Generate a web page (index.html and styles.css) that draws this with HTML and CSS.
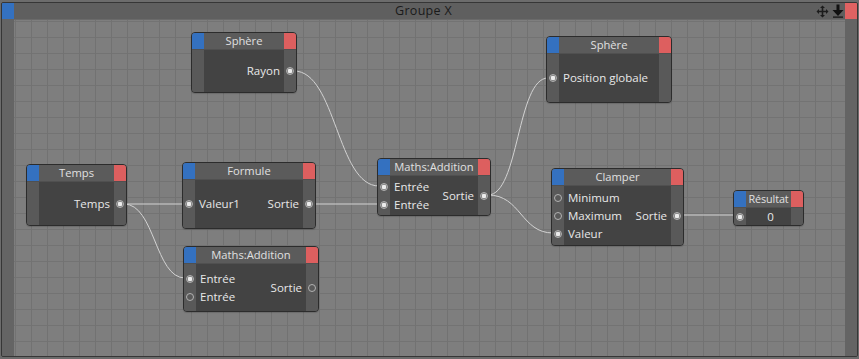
FILE: index.html
```html
<!DOCTYPE html>
<html lang="fr">
<head>
<meta charset="utf-8">
<title>Groupe X</title>
<link rel="stylesheet" href="styles.css">
</head>
<body>
<div class="group">
  <div class="cap cap-blue"></div>
  <div class="group-title">
    <span class="group-name">Groupe X</span>
    <span class="group-tools">
      <svg class="tool" width="13" height="13" viewBox="0 0 13 13" aria-hidden="true">
        <path d="M6.5 0.5 L9 3 H7.3 V5.7 H10 V4 L12.5 6.5 L10 9 V7.3 H7.3 V10 H9 L6.5 12.5 L4 10 H5.7 V7.3 H3 V9 L0.5 6.5 L3 4 V5.7 H5.7 V3 H4 Z" fill="#1c1c1c"/>
      </svg>
      <svg class="tool" width="12" height="14" viewBox="0 0 12 14" aria-hidden="true">
        <path d="M4.5 0.5 H7.5 V6 H11.5 L6 12 L0.5 6 H4.5 Z" fill="#111"/>
        <rect x="1" y="12.5" width="10" height="1.2" fill="#111"/>
      </svg>
    </span>
  </div>
  <div class="cap cap-red"></div>
  <div class="strip"></div>
  <div class="canvas">
    <svg class="wires" width="831" height="336" aria-hidden="true">
      <path d="M280 51 C322 51 323 166 365 166"/>
      <path d="M110 184 H170"/>
      <path d="M110 184 C141 184 141 258 171 258"/>
      <path d="M299 184 H365"/>
      <path d="M474 175 C505 175 503 58 534 58"/>
      <path d="M474 175 C507 175 507 213 539 213"/>
      <path d="M667 195 H721"/>
    </svg>

    <div class="node n-sph1">
      <div class="nt"><span class="nc nc-b"></span><span class="ntx">Sphère</span><span class="nc nc-r"></span></div>
      <div class="nb">
        <div class="ins"></div>
        <div class="outs">
          <div class="row out"><span class="lbl">Rayon</span><span class="pc"><i class="port on"></i></span></div>
        </div>
      </div>
    </div>

    <div class="node n-temps">
      <div class="nt"><span class="nc nc-b"></span><span class="ntx">Temps</span><span class="nc nc-r"></span></div>
      <div class="nb">
        <div class="ins"></div>
        <div class="outs">
          <div class="row out"><span class="lbl">Temps</span><span class="pc"><i class="port on"></i></span></div>
        </div>
      </div>
    </div>

    <div class="node n-form">
      <div class="nt"><span class="nc nc-b"></span><span class="ntx">Formule</span><span class="nc nc-r"></span></div>
      <div class="nb">
        <div class="ins">
          <div class="row"><span class="pc"><i class="port on"></i></span><span class="lbl">Valeur1</span></div>
        </div>
        <div class="outs">
          <div class="row out"><span class="lbl">Sortie</span><span class="pc"><i class="port on"></i></span></div>
        </div>
      </div>
    </div>

    <div class="node n-add1">
      <div class="nt"><span class="nc nc-b"></span><span class="ntx">Maths:Addition</span><span class="nc nc-r"></span></div>
      <div class="nb">
        <div class="ins">
          <div class="row"><span class="pc"><i class="port on"></i></span><span class="lbl">Entrée</span></div>
          <div class="row"><span class="pc"><i class="port on"></i></span><span class="lbl">Entrée</span></div>
        </div>
        <div class="outs">
          <div class="row out"><span class="lbl">Sortie</span><span class="pc"><i class="port on"></i></span></div>
        </div>
      </div>
    </div>

    <div class="node n-sph2">
      <div class="nt"><span class="nc nc-b"></span><span class="ntx">Sphère</span><span class="nc nc-r"></span></div>
      <div class="nb">
        <div class="ins">
          <div class="row"><span class="pc"><i class="port on"></i></span><span class="lbl">Position globale</span></div>
        </div>
        <div class="outs"></div>
      </div>
    </div>

    <div class="node n-clamp">
      <div class="nt"><span class="nc nc-b"></span><span class="ntx">Clamper</span><span class="nc nc-r"></span></div>
      <div class="nb">
        <div class="ins">
          <div class="row"><span class="pc"><i class="port"></i></span><span class="lbl">Minimum</span></div>
          <div class="row"><span class="pc"><i class="port"></i></span><span class="lbl">Maximum</span></div>
          <div class="row"><span class="pc"><i class="port on"></i></span><span class="lbl">Valeur</span></div>
        </div>
        <div class="outs">
          <div class="row out"><span class="lbl">Sortie</span><span class="pc"><i class="port on"></i></span></div>
        </div>
      </div>
    </div>

    <div class="node n-res">
      <div class="nt"><span class="nc nc-b"></span><span class="ntx">Résultat</span><span class="nc nc-r"></span></div>
      <div class="nb">
        <div class="ins grow">
          <div class="row"><span class="pc"><i class="port on"></i></span><span class="lbl val">0</span></div>
        </div>
      </div>
    </div>

    <div class="node n-add2">
      <div class="nt"><span class="nc nc-b"></span><span class="ntx">Maths:Addition</span><span class="nc nc-r"></span></div>
      <div class="nb">
        <div class="ins">
          <div class="row"><span class="pc"><i class="port on"></i></span><span class="lbl">Entrée</span></div>
          <div class="row"><span class="pc"><i class="port"></i></span><span class="lbl">Entrée</span></div>
        </div>
        <div class="outs">
          <div class="row out"><span class="lbl">Sortie</span><span class="pc"><i class="port"></i></span></div>
        </div>
      </div>
    </div>
  </div>
  <div class="strip"></div>
</div>
</body>
</html>
```

FILE: styles.css
```css
html, body {
  margin: 0;
  padding: 0;
}
body {
  background: #6c6c6c;
  font-family: "Open Sans", "DejaVu Sans", sans-serif;
  font-size: 11.5px;
  width: 859px;
  height: 359px;
  overflow: hidden;
}

.group {
  margin: 2px 0 0 1px;
  width: 857px;
  height: 355px;
  box-sizing: border-box;
  border: 1px solid #363636;
  border-radius: 2px;
  display: grid;
  grid-template-columns: 12px 1fr 12px;
  grid-template-rows: 16px 1fr;
  background: #5f5f5f;
  overflow: hidden;
}

.cap-blue { background: #3471c0; }
.cap-red { background: #df6262; }

.group-title {
  position: relative;
  background: #5f5f5f;
  display: flex;
  align-items: center;
  justify-content: center;
  color: #1a1a1a;
  font-size: 12.5px;
  line-height: 16px;
}
.group-name {
  margin-left: -12px;
  letter-spacing: 0.3px;
}
.group-tools {
  position: absolute;
  right: 1px;
  top: 1px;
  display: flex;
  gap: 3px;
  align-items: center;
}
.tool { display: block; }

.strip {
  background: #646464;
}

.canvas {
  position: relative;
  background-color: #7e7e7e;
  background-image:
    linear-gradient(to right, #727272 1px, transparent 1px),
    linear-gradient(to bottom, #737373 1px, transparent 1px);
  background-size: 16px 16px;
  background-position: 1px 1px;
  border-top: 1px solid #6a6a6a;
}

.wires {
  position: absolute;
  left: 0;
  top: 0;
  fill: none;
  stroke: #d2d2d2;
  stroke-width: 1;
}
.wires path { fill: none; }

/* nodes */
.node {
  position: absolute;
  box-sizing: border-box;
  border: 1px solid #2c2c2c;
  border-radius: 4px;
  overflow: hidden;
  display: flex;
  flex-direction: column;
  background: #5a5a5a;
  color: #e8e8e8;
  box-shadow: 0 1px 1px rgba(0,0,0,0.15);
}
.nt {
  height: 16px;
  flex: none;
  display: flex;
  background: #5b5b5b;
  border-bottom: 1px solid #505050;
}
.nc { width: 12px; flex: none; }
.nc-b { background: #3471c0; }
.nc-r { background: #dd5f5f; }
.ntx {
  flex: 1;
  text-align: center;
  line-height: 16px;
  font-size: 11.2px;
  color: #e0e0e0;
  white-space: nowrap;
  overflow: hidden;
}
.n-res .ntx { font-size: 10.8px; letter-spacing: -0.1px; }

.nb {
  flex: 1;
  display: flex;
  justify-content: space-between;
  background: linear-gradient(to right, #595959 12px, #434343 12px, #434343 calc(100% - 12px), #595959 calc(100% - 12px));
}
.ins, .outs {
  display: flex;
  flex-direction: column;
  justify-content: center;
}
.grow { flex: 1; }
.row {
  height: 18px;
  display: flex;
  align-items: center;
  white-space: nowrap;
}
.out { justify-content: flex-end; }
.pc {
  width: 12px;
  flex: none;
  display: flex;
  align-items: center;
  justify-content: center;
}
.lbl { padding: 0 3px 0 4px; line-height: 18px; }
.out .lbl { padding: 0 4px 0 3px; }
.val { flex: 1; text-align: center; padding-right: 12px; }

.port {
  display: block;
  width: 8px;
  height: 8px;
  box-sizing: border-box;
  border-radius: 50%;
  border: 1px solid #b2b2b2;
}
.port.on {
  background: radial-gradient(circle, #ececec 0 2px, #777 2.6px);
}

.n-sph1  { left: 177px; top: 12px;  width: 106px; height: 61px; }
.n-temps { left: 12px;  top: 144px; width: 101px; height: 62px; }
.n-form  { left: 168px; top: 142px; width: 134px; height: 67px; }
.n-add1  { left: 363px; top: 138px; width: 114px; height: 58px; }
.n-sph2  { left: 532px; top: 16px;  width: 126px; height: 67px; }
.n-clamp { left: 537px; top: 148px; width: 133px; height: 78px; }
.n-res   { left: 719px; top: 170px; width: 71px;  height: 36px; }
.n-add2  { left: 169px; top: 226px; width: 136px; height: 66px; }
```
